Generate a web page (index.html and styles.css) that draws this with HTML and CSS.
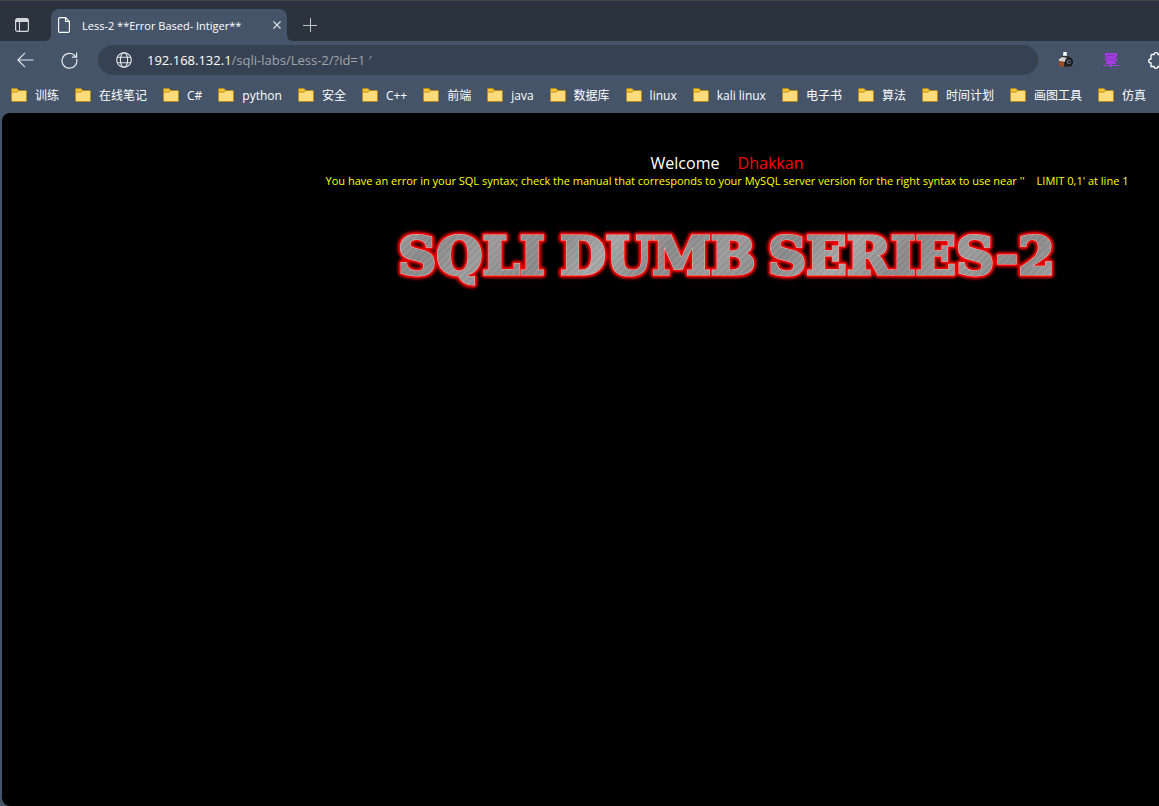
FILE: index.html
```
<!DOCTYPE html>
<html lang="zh-CN">
<head>
<meta charset="utf-8">
<title>Less-2 **Error Based- Intiger**</title>
<link rel="stylesheet" href="styles.css">
</head>
<body>
<svg class="defs" width="0" height="0" aria-hidden="true">
  <symbol id="folder" viewBox="0 0 16 14">
    <path d="M.5 12.5V1.5Q.5.5 1.5.5H6L7.5 2.5H14.5Q15.5 2.5 15.5 3.5V12.5Q15.5 13.5 14.5 13.5H1.5Q.5 13.5.5 12.5Z" fill="#ffdb7c" stroke="#b88c12"/>
    <path d="M1 1H6L7 2.3 5.8 3.5H1Z" fill="#f5c62c"/>
    <path d="M1 4H6L7.5 2.5H15" fill="none" stroke="#b88c12"/>
  </symbol>
</svg>
<header class="tabs">
  <button class="icon-btn tab-actions" aria-label="Tab actions">
    <svg width="14" height="14" viewBox="0 0 14 14"><rect x=".6" y=".6" width="12.8" height="12.8" rx="2" fill="none" stroke="#d3d6da" stroke-width="1.2"/><path d="M1 1H13V4H1Z" fill="#d3d6da"/><path d="M4.5 4V13" stroke="#d3d6da"/></svg>
  </button>
  <div class="tab">
    <svg width="12" height="16" viewBox="0 0 12 16" fill="none" stroke="#fff" stroke-width="1.1"><path d="M2 .6H7.5L11.4 4.5V14Q11.4 15.4 10 15.4H2Q.6 15.4.6 14V2Q.6.6 2 .6ZM7.5.6V4.5H11.4"/></svg>
    <span class="tab-title">Less-2 **Error Based- Intiger**</span>
    <button class="icon-btn" aria-label="Close tab"><svg width="8" height="8" viewBox="0 0 8 8" stroke="#e8eaed" stroke-width="1.2"><path d="M.4.4 7.6 7.6M7.6.4.4 7.6"/></svg></button>
  </div>
  <button class="icon-btn new-tab" aria-label="New tab"><svg width="14" height="14" viewBox="0 0 14 14" stroke="#c3c7cc"><path d="M7.5 0V14M0 7.5H14"/></svg></button>
</header>
<nav class="toolbar">
  <button class="icon-btn" aria-label="Back"><svg width="17" height="16" viewBox="0 0 17 16" fill="none" stroke="#e4e7eb" stroke-width="1.2"><path d="M8 .8.9 8 8 15.2M1 8H16.5"/></svg></button>
  <button class="icon-btn reload" aria-label="Reload"><svg width="17" height="17" viewBox="0 0 17 17" fill="none" stroke="#e4e7eb" stroke-width="1.2"><path d="M15.6 7A7.4 7.4 0 1 1 13 3L15.3 5M15.6.5V5.2H11"/></svg></button>
  <div class="address">
    <svg width="16" height="16" viewBox="0 0 16 16" fill="none" stroke="#e4e7eb" stroke-width="1.1"><circle cx="8" cy="8" r="7.3"/><ellipse cx="8" cy="8" rx="3.6" ry="7.3"/><path d="M1.2 5.3H14.8M1.2 10.7H14.8"/></svg>
    <a class="url" href="#"><span class="host">192.168.132.1</span>/sqli-labs/Less-2/?id=1 ′</a>
  </div>
  <div class="extensions">
    <button class="icon-btn" aria-label="Screenshot"><svg width="16" height="16" viewBox="0 0 16 16"><path d="M5 0H9V4H5Z" fill="#c8d0d8"/><path d="M6 0H8V3H6Z" fill="#fff"/><path d="M1 6 4 4 11 4 14 7 13 8H1Z" fill="#343434"/><path d="M1 7 4 5 9 6 7 10 1 9Z" fill="#d5d2ce"/><path d="M1 9 6 10V15L1 14Z" fill="#9b4d1e"/><path d="M6 10 14 9V14L6 15Z" fill="#2a2a2a"/><circle cx="11" cy="10" r="4" fill="#161616"/><circle cx="11" cy="10" r="2.4" fill="#57687a"/><circle cx="11.5" cy="10" r="1.2" fill="#222"/></svg></button>
    <button class="icon-btn" aria-label="Proxy"><svg width="16" height="16" viewBox="0 0 16 16" fill="#a33be0"><path d="M2 1H14V5H2ZM4 5H12V6H4ZM2 6H14V9H2ZM4 9H12V10H4ZM3 10H13V12H3ZM7 12H9V13H7ZM0 13H16V14H0ZM7 12H9V15H7Z"/><path d="M4 3H12V4H4ZM4 7H12V8H4Z" fill="#7f39b4"/></svg></button>
    <button class="icon-btn" aria-label="Extensions"><svg width="17" height="17" viewBox="0 0 17 17" fill="none" stroke="#fff" stroke-width="1.3"><path d="M4 2.5H6Q6 .7 8 .7T10 2.5H14V6Q16.3 6 16.3 8T14 10V14.5H10Q10 16.3 8 16.3T6 14.5H3V11Q.7 11 .7 9T3 7V4Q3 2.5 4 2.5Z"/></svg></button>
  </div>
</nav>
<nav class="bookmarks">
  <a href="#"><svg><use href="#folder"/></svg>训练</a>
  <a href="#"><svg><use href="#folder"/></svg>在线笔记</a>
  <a href="#"><svg><use href="#folder"/></svg>C#</a>
  <a href="#"><svg><use href="#folder"/></svg>python</a>
  <a href="#"><svg><use href="#folder"/></svg>安全</a>
  <a href="#"><svg><use href="#folder"/></svg>C++</a>
  <a href="#"><svg><use href="#folder"/></svg>前端</a>
  <a href="#"><svg><use href="#folder"/></svg>java</a>
  <a href="#"><svg><use href="#folder"/></svg>数据库</a>
  <a href="#"><svg><use href="#folder"/></svg>linux</a>
  <a href="#"><svg><use href="#folder"/></svg>kali linux</a>
  <a href="#"><svg><use href="#folder"/></svg>电子书</a>
  <a href="#"><svg><use href="#folder"/></svg>算法</a>
  <a href="#"><svg><use href="#folder"/></svg>时间计划</a>
  <a href="#"><svg><use href="#folder"/></svg>画图工具</a>
  <a href="#"><svg><use href="#folder"/></svg>仿真</a>
  <a href="#" aria-label="More"><svg><use href="#folder"/></svg></a>
</nav>
<main class="page">
  <p class="welcome">Welcome <span class="name">Dhakkan</span></p>
  <p class="error">You have an error in your SQL syntax; check the manual that corresponds to your MySQL server version for the right syntax to use near ''<span class="limit">LIMIT 0,1' at line 1</span></p>
  <svg class="banner" width="680" height="72" viewBox="0 0 680 72" role="img" aria-label="SQLI DUMB SERIES-2">
    <defs>
      <linearGradient id="steel" gradientUnits="userSpaceOnUse" x1="0" y1="0" x2="70" y2="60" spreadMethod="reflect"><stop offset="0" stop-color="#a8a8a8"/><stop offset=".5" stop-color="#8a8a8a"/><stop offset="1" stop-color="#9c9c9c"/></linearGradient>
      <pattern id="lines" width="5" height="5" patternUnits="userSpaceOnUse" patternTransform="rotate(-45)"><path d="M0 1H5" stroke="#fff" stroke-opacity=".09"/><path d="M0 3H5" stroke="#000" stroke-opacity=".08"/></pattern>
      <pattern id="brushed" width="680" height="72" patternUnits="userSpaceOnUse"><rect width="680" height="72" fill="url(#steel)"/><rect width="680" height="72" fill="url(#lines)"/></pattern>
      <filter id="glow" x="-5%" y="-30%" width="110%" height="160%"><feGaussianBlur stdDeviation="1.5"/></filter>
      <g id="words"><text x="11" y="52">SQLI</text><text x="173" y="52">DUMB</text><text x="381" y="52">SERIES-2</text></g>
    </defs>
    <use href="#words" class="glow"/>
    <use href="#words" class="rim"/>
    <use href="#words" class="shine"/>
    <use href="#words" class="metal"/>
  </svg>
</main>
</body>
</html>
```
FILE: styles.css
```
* { box-sizing: border-box; }
body {
  margin: 0;
  min-height: 100vh;
  display: flex;
  flex-direction: column;
  overflow: hidden;
  background: #455469;
  color: #fff;
  font-family: "Open Sans", "Noto Sans CJK SC", sans-serif;
  font-size: 12px;
}
a { color: inherit; text-decoration: none; }
.defs { position: absolute; }
.icon-btn { display: flex; flex: none; padding: 0; border: 0; background: none; }
.tabs {
  display: flex;
  align-items: flex-end;
  height: 41px;
  padding-left: 15px;
  background: #2b333f;
  border-top: 1px solid #41464a;
}
.tab-actions { margin: 0 22px 9px 0; }
.tab {
  position: relative;
  display: flex;
  align-items: center;
  width: 236px;
  height: 32px;
  padding: 0 6px 0 7px;
  border-radius: 8px 8px 0 0;
  background: #455469;
}
.tab::before, .tab::after {
  content: "";
  position: absolute;
  bottom: 0;
  width: 6px;
  height: 6px;
}
.tab::before { right: 100%; background: radial-gradient(circle at 0 0, transparent 6px, #455469 6px); }
.tab::after { left: 100%; background: radial-gradient(circle at 100% 0, transparent 6px, #455469 6px); }
.tab-title { flex: 1; margin-left: 12px; font-size: 11px; white-space: nowrap; }
.new-tab { margin: 0 0 9px 16px; }
.toolbar { display: flex; align-items: center; height: 38px; padding-left: 17px; }
.reload { margin: 0 20px 0 27px; }
.address {
  flex: 1;
  display: flex;
  align-items: center;
  gap: 15px;
  height: 30px;
  padding-left: 18px;
  border-radius: 15px;
  background: #364252;
  font-size: 13px;
}
.url { color: #a2a5aa; }
.host { color: #fff; }
.extensions { display: flex; gap: 29px; margin: 0 -6px 0 20px; }
.bookmarks {
  display: flex;
  gap: 16px;
  height: 34px;
  padding: 0 0 2px 11px;
  overflow: hidden;
}
.bookmarks a { display: flex; flex: none; align-items: center; gap: 8px; white-space: nowrap; }
.bookmarks svg { width: 16px; height: 14px; }
.page {
  flex: 1;
  display: flex;
  flex-direction: column;
  align-items: center;
  margin-left: 2px;
  padding: 39px 0 0 293px;
  border-radius: 8px 0 0 8px;
  background: #000;
}
.page p { margin: 0; white-space: nowrap; }
.welcome { font-size: 16px; line-height: 22px; }
.name { margin-left: 14px; color: #f00; }
.error { color: #ff0; font-size: 11px; line-height: 13px; }
.limit { margin-left: 12px; }
.banner { margin-top: 35px; font-family: "DejaVu Serif", serif; font-size: 53px; font-weight: bold; }
.glow { fill: #d00; stroke: #d00; stroke-width: 8px; stroke-linejoin: round; filter: url(#glow); }
.rim { fill: #e00; stroke: #e00; stroke-width: 6px; stroke-linejoin: round; }
.shine { fill: #fff; stroke: #e8b8b8; stroke-width: 3px; }
.metal { fill: url(#brushed); stroke: url(#brushed); stroke-width: 2px; }
```
